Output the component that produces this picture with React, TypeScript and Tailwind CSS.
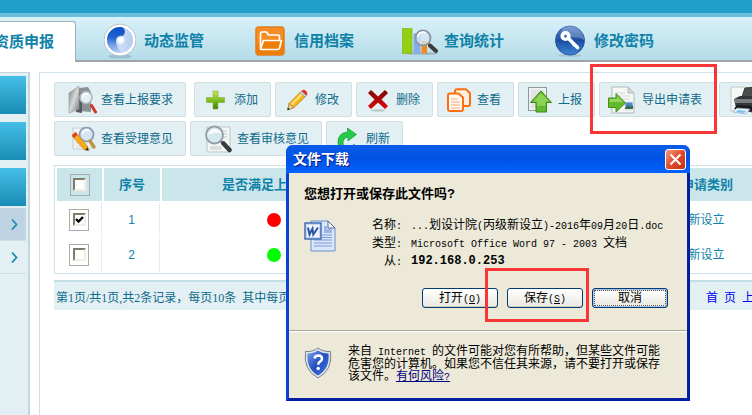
import React, {useState} from "react";

const SwirlIcon = () => (
  <svg width="36" height="36" viewBox="0 0 36 36">
    <defs>
      <linearGradient id="swirl" x1="0" y1="0" x2="1" y2="0">
        <stop offset="0" stopColor="#7ea6e4" />
        <stop offset="0.5" stopColor="#cfdef6" />
        <stop offset="1" stopColor="#b4cbee" />
      </linearGradient>
      <linearGradient id="swirlDark" x1="0.6" y1="0" x2="0.5" y2="1">
        <stop offset="0" stopColor="#0a50c8" />
        <stop offset="0.45" stopColor="#2464d0" />
        <stop offset="1" stopColor="#a9c3ee" stopOpacity="0.4" />
      </linearGradient>
      <radialGradient id="swirlGlow">
        <stop offset="0" stopColor="#ffffff" />
        <stop offset="0.5" stopColor="#ffffff" stopOpacity="0.9" />
        <stop offset="1" stopColor="#ffffff" stopOpacity="0" />
      </radialGradient>
    </defs>
    <ellipse cx="18" cy="33.500" rx="12" ry="2" fill="#8fb4c0" opacity="0.7" />
    <circle cx="18" cy="17" r="16" fill="#ffffff" stroke="#b3c4cf" strokeWidth="1" />
    <circle cx="18" cy="17" r="13" fill="url(#swirl)" />
    <path d="M19 4A13 13 0 0 0 5 17a13 13 0 0 0 15 12.800Q14 25 14 18.500 14 14 18.500 13.500 22.500 13 22.800 9 23 4.500 19 4Z" fill="url(#swirlDark)" />
    <circle cx="18.500" cy="17" r="5" fill="url(#swirlGlow)" />
  </svg>
);

const FolderIcon = () => (
  <svg width="30" height="30" viewBox="0 0 30 30">
    <rect x="0.700" y="0.700" width="28.600" height="28.600" rx="2.500" fill="#f07d06" stroke="#d88b45" />
    <path d="M2 2h26v11C18 12 8 14 2 18Z" fill="#f79a38" opacity="0.6" />
    <path d="M5.500 23V7.500Q5.500 6 7 6h4.500l2 3H23q1.500 0 1.500 1.500V14M5.500 23l3-8.500h18L24.500 22Q24 23.500 22.500 23.500H7Q5.500 23.500 5.500 23Z" fill="none" stroke="#fff" strokeWidth="1.700" strokeLinejoin="round" />
  </svg>
);

const StatsIcon = () => (
  <svg width="36" height="28" viewBox="0 0 36 28">
    <ellipse cx="20" cy="26.500" rx="16" ry="1.300" fill="#8aa7b1" opacity="0.7" />
    <rect x="0.500" y="1.500" width="9.500" height="25" fill="#93cf12" stroke="#7ab00c" strokeWidth="0.600" />
    <rect x="11.500" y="6.500" width="7" height="20" fill="#86abec" />
    <rect x="19.500" y="14" width="5.500" height="12.500" fill="#f28a1b" />
    <circle cx="21" cy="11" r="7.500" fill="#d3e7f7" fillOpacity="0.75" stroke="#8d969c" strokeWidth="1.800" />
    <path d="M16 10a5 5 0 0 1 8-4" fill="none" stroke="#fff" strokeWidth="1.600" />
    <path d="m26.500 16.500 2 2" stroke="#9b9b9b" strokeWidth="2.500" />
    <path d="m28 18.500 6 5.500" stroke="#3c3c3c" strokeWidth="4" strokeLinecap="round" />
  </svg>
);

const KeyIcon = () => (
  <svg width="32" height="32" viewBox="0 0 32 32">
    <defs>
      <linearGradient id="key" x1="0" y1="0" x2="0" y2="1">
        <stop offset="0" stopColor="#5a86cb" />
        <stop offset="0.5" stopColor="#1c4da0" />
        <stop offset="1" stopColor="#3c86d6" />
      </linearGradient>
    </defs>
    <ellipse cx="16" cy="30.500" rx="12" ry="1.300" fill="#8fb4c0" opacity="0.6" />
    <circle cx="16" cy="15.500" r="14.500" fill="url(#key)" stroke="#2a57a0" />
    <path d="M9 2a14 14 0 0 1 21 13C23 10 15 15 7 9Z" fill="#fff" opacity="0.22" />
    <circle cx="11.500" cy="11" r="3.300" fill="none" stroke="#fff" strokeWidth="3.600" />
    <path d="m14.500 13.500 9 9" stroke="#fff" strokeWidth="3.600" strokeLinecap="round" />
    <path d="m19 21 2-2" stroke="#fff" strokeWidth="2" />
  </svg>
);

const ReportIcon = () => (
  <svg width="30" height="30" viewBox="0 0 30 30">
    <defs>
      <linearGradient id="book" x1="0" y1="0" x2="1" y2="1">
        <stop offset="0" stopColor="#757b7d" />
        <stop offset="0.5" stopColor="#d7dadb" />
        <stop offset="1" stopColor="#737a7c" />
      </linearGradient>
    </defs>
    <path d="M11 3l9-1 3 5v20l-12-1Z" fill="#8c9395" />
    <path d="M8 10l6-3v21l-6-1Z" fill="#555b5d" />
    <path d="M1 8 11 1v23L1 28Z" fill="url(#book)" stroke="#8d9496" strokeWidth="0.600" />
    <circle cx="18" cy="12.500" r="6" fill="#e6eff3" stroke="#afb8bd" strokeWidth="1.600" />
    <path d="M14.500 12a3.500 3.500 0 0 1 6-2" fill="none" stroke="#fff" strokeWidth="1.800" />
    <path d="m21.500 17.500 2 3" stroke="#a0a4a6" strokeWidth="2" />
    <path d="m23.500 20.500 4 6.500" stroke="#cf3a2b" strokeWidth="3" strokeLinecap="round" />
  </svg>
);

const PlusIcon = () => (
  <svg width="24" height="24" viewBox="0 0 24 24">
    <defs>
      <linearGradient id="plus" x1="0" y1="0" x2="0" y2="1">
        <stop offset="0" stopColor="#c6e65c" />
        <stop offset="0.500" stopColor="#80c01c" />
        <stop offset="1" stopColor="#3b7d05" />
      </linearGradient>
    </defs>
    <path d="M9 3h5v6.500h6.500v5H14V21H9v-6.500H2.500v-5H9Z" fill="url(#plus)" stroke="#86ad46" strokeWidth="0.600" />
  </svg>
);

const PencilIcon = () => (
  <svg width="24" height="24" viewBox="0 0 24 24">
    <path d="M4 15.500 15.500 4l5 4.500L8.500 20Z" fill="#f5b51c" stroke="#b0740b" strokeWidth="0.700" />
    <path d="M5.500 16 16.500 5l1.500 1.500L7 17.500Z" fill="#ffe36b" />
    <path d="M4 15.500 2.500 22l6-2Z" fill="#efcf9a" stroke="#8a5a18" strokeWidth="0.600" />
    <path d="m3 19.500-.6 2.600 2.600-.9Z" fill="#222" />
    <path d="m15 4.500 1.500-1.500 5 4.500L20 9Z" fill="#c8ced3" stroke="#7d858a" strokeWidth="0.500" />
    <path d="M16.500 3q2-2.500 4.500 0 2.500 2.500.5 4.500Z" fill="#ea2d22" />
  </svg>
);

const CrossIcon = () => (
  <svg width="24" height="24" viewBox="0 0 24 24">
    <defs>
      <linearGradient id="cross" x1="0" y1="0" x2="0" y2="1">
        <stop offset="0" stopColor="#7d0606" />
        <stop offset="1" stopColor="#dd0707" />
      </linearGradient>
    </defs>
    <ellipse cx="12" cy="22.500" rx="7" ry="1" fill="#b4c3c6" />
    <path d="m5 2 7 6.500L19 2l3 3-6.500 6.500L22 18l-3 3-7-6.500L5 21l-3-3 6.500-6.500L2 5Z" fill="url(#cross)" />
  </svg>
);

const CopyIcon = () => (
  <svg width="24" height="24" viewBox="0 0 24 24">
    <g stroke="#fd6f10" strokeWidth="2" strokeLinejoin="round">
      <path d="M10 1.200h9l4 4V16q0 2-2 2H10q-2 0-2-2V3.200q0-2 2-2Z" fill="#fff1e2" />
      <path d="M3 5.500h8.500l4.500 4V21q0 2-2 2H3q-2 0-2-2V7.500q0-2 2-2Z" fill="#fffaf4" />
    </g>
    <path d="M4 11h7M4 14h9M4 17h9M4 20h9" stroke="#f7a871" />
  </svg>
);

const UploadIcon = () => (
  <svg width="24" height="26" viewBox="0 0 24 26">
    <rect x="0.500" y="0.500" width="18" height="23" fill="#f2f3f3" stroke="#8e9798" />
    <rect x="2.500" y="2.500" width="14" height="19" fill="#dfe5e6" />
    <path d="M13 4 23.500 15.500H18.500V25H8V15.500H2.500Z" fill="#63b72d" stroke="#3c8616" />
    <path d="M13 6l8 8.500h-3.500V19q-4-1-8.500 0v-4.500H5Z" fill="#8fd355" />
  </svg>
);

const ExportIcon = () => (
  <svg width="28" height="28" viewBox="0 0 28 28">
    <path d="M4 1h16l6 6v20H4Z" fill="#f6f7f7" stroke="#b1b9bb" />
    <path d="M20 1v6h6Z" fill="#d7dcdd" stroke="#b1b9bb" />
    <path d="M8 7h9M8 10h14M8 13h14M17 24h7" stroke="#d0d6d8" />
    <rect x="17" y="16" width="8" height="7" fill="#4d87ce" stroke="#dfe8ef" />
    <path d="m17 22 3-3 2 2 3-2v4h-8Z" fill="#396b4d" />
    <path d="M.5 12H8V7.500L17.500 17 8 26v-4.500H.5Z" fill="#62b929" stroke="#418f18" />
    <path d="M1.500 13H9v-3l6 6H1.500Z" fill="#95d65f" />
  </svg>
);

const PrinterIcon = () => (
  <svg width="32" height="30" viewBox="0 0 32 30">
    <path d="M1 2h14l4 4v20H1Z" fill="#f5f6f6" stroke="#c0c7c9" />
    <path d="m12 12 3-9 14-1 1 10Z" fill="#4b4e50" stroke="#333" />
    <path d="m4 14 6-3h20l2 3v10l-8 4-18-5Z" fill="#34373a" />
    <path d="M4 14h26v4H5Z" fill="#777c7f" />
    <path d="m7 20 14 1 3 4-8 1-12-2Z" fill="#17191b" />
    <path d="m7 23 13 1-4 5-13-2Z" fill="#e7f3fc" stroke="#7da5c2" strokeWidth="0.600" />
    <path d="m8 25 8 1-2 2-8-1Z" fill="#78bff0" />
  </svg>
);

const NotePencilIcon = () => (
  <svg width="28" height="28" viewBox="0 0 28 28">
    <path d="M3 3h18v21H3Z" fill="#f1f3f5" stroke="#c4cbce" />
    <path d="M6 18h12M6 21h12" stroke="#ced5d8" />
    <circle cx="16.500" cy="9.500" r="7" fill="#d4e6f6" stroke="#8b9bb1" strokeWidth="1.700" />
    <path d="M12.500 9a4 4 0 0 1 6.500-3" fill="none" stroke="#fff" strokeWidth="1.800" />
    <path d="m20 16 4 6" stroke="#bd9549" strokeWidth="3.500" strokeLinecap="round" />
    <path d="m3 9 3-1.500L18 22l-1 3-3-.5L2.500 11.500Z" fill="#f7ab1a" stroke="#cf7c08" strokeWidth="0.600" />
    <path d="m2 10.500 3.500-3.500 2 2.500L4 13Z" fill="#e43a2c" />
    <path d="m15 25 3-3 .7 4Z" fill="#4c3413" />
  </svg>
);

const MagnifierIcon = () => (
  <svg width="30" height="28" viewBox="0 0 30 28">
    <path d="M3 2h23v25H3Z" fill="#f5f6f6" stroke="#bcc3c5" />
    <path d="M18 6h5M19 9h4M19 12h4M6 22h12M6 24h12" stroke="#c2c9cc" />
    <circle cx="10.500" cy="10" r="8.500" fill="#d5e8ed" stroke="#92a1a6" strokeWidth="1.800" />
    <path d="M4 10q1-6 7-6 5 0 6 4-6-1-13 2Z" fill="#fff" opacity="0.8" />
    <path d="m16.500 16 3 3" stroke="#858b8d" strokeWidth="2.500" />
    <path d="m19.500 18.500 6 6.500" stroke="#383b3d" strokeWidth="4.500" strokeLinecap="round" />
  </svg>
);

const RefreshIcon = () => (
  <svg width="24" height="24" viewBox="0 0 24 24">
    <path d="M11.500 1 20.500 7.500 12 14v-4q-5 1-5 6 0 4 4.500 4.500Q16 21 18 17q0 5-6 6-9 .5-10-7Q1.500 6 11.500 5Z" fill="#27c94b" stroke="#149a32" strokeWidth="0.700" />
  </svg>
);

const WordIcon = () => (
  <svg width="32" height="32" viewBox="0 0 32 32">
    <path d="M7 1h17l7 7v23H7Z" fill="#dbe6fa" stroke="#6c8fc8" />
    <path d="M24 1v7h7Z" fill="#fff" stroke="#45679e" />
    <path d="M20 6h3v3h5v4h-8Z" fill="#9bb6e4" />
    <path d="M10 20h18M10 23h18M10 26h18M18 15h10M18 17.500h10" stroke="#7a9cd4" />
    <rect x="1" y="3" width="16" height="16" fill="#c9d9f5" stroke="#2e5cad" strokeWidth="1.300" />
    <rect x="3" y="5" width="12" height="12" fill="#f0f5ff" />
    <path d="m4 7.500 1.500 7 3-6 .8 6L14 7.500" fill="none" stroke="#2a55a8" strokeWidth="2" />
  </svg>
);

const ShieldIcon = () => (
  <svg width="28" height="32" viewBox="0 0 28 32">
    <defs>
      <linearGradient id="shield" x1="0" y1="0" x2="1" y2="1">
        <stop offset="0" stopColor="#7aa4ee" />
        <stop offset="0.500" stopColor="#2450bd" />
        <stop offset="1" stopColor="#3f74de" />
      </linearGradient>
    </defs>
    <path d="M14 1q5 4 12.500 3.500Q29 23 14 31-1 23 1.500 4.500 9 5 14 1Z" fill="#dfe5ea" stroke="#7a8188" />
    <path d="M14 3.500q4 3 10.500 3Q26 21.500 14 28.500 2 21.500 3.500 6.500q6.500 0 10.500-3Z" fill="url(#shield)" />
    <path d="M10.500 11.500q.5-3 4-3 3.500.2 3.500 3 0 2-2 3.200-1.800 1-1.800 3" fill="none" stroke="#fff" strokeWidth="2.600" />
    <circle cx="14.200" cy="21.500" r="1.700" fill="#fff" />
  </svg>
);

const tabs = [
  {name: "资质申报", icon: null, active: true},
  {name: "动态监管", icon: <SwirlIcon />},
  {name: "信用档案", icon: <FolderIcon />},
  {name: "查询统计", icon: <StatsIcon />},
  {name: "修改密码", icon: <KeyIcon />},
];

const toolbar = [
  [
    {name: "查看上报要求", icon: <ReportIcon />, size: "w-[132px] gap-[3px] mr-1"},
    {name: "添加", icon: <PlusIcon />, size: "w-[77px] gap-[6px]"},
    {name: "修改", icon: <PencilIcon />, size: "w-[77px] gap-[6px]"},
    {name: "删除", icon: <CrossIcon />, size: "w-[77px] gap-[6px]"},
    {name: "查看", icon: <CopyIcon />, size: "w-[77px] gap-[6px]"},
    {name: "上报", icon: <UploadIcon />, size: "w-[77px] gap-[6px]"},
    {name: "导出申请表", icon: <ExportIcon />, size: "w-[116px] gap-[6px]"},
    {name: "", icon: <PrinterIcon />, size: "w-[56px]"},
  ],
  [
    {name: "查看受理意见", icon: <NotePencilIcon />, size: "w-[132px] gap-[3px]"},
    {name: "查看审核意见", icon: <MagnifierIcon />, size: "w-[132px] gap-[3px]"},
    {name: "刷新", icon: <RefreshIcon />, size: "w-[77px] gap-[6px]"},
  ],
];

const rows = [
  {id: 1, dot: "bg-[#ff0000]", type: "新设立"},
  {id: 2, dot: "bg-[#00ff00]", type: "新设立"},
];

const Check = ({label, checked, onChange}: {label: string; checked: boolean; onChange: () => void}) => (
  <label className="relative mx-auto flex h-[22px] w-5 items-center justify-center border border-[#aaaaaa]">
    <input type="checkbox" aria-label={label} checked={checked} onChange={onChange}
      className="h-[13px] w-[13px] appearance-none border-2 border-t-[#7f7c6c] border-l-[#7f7c6c] border-r-[#f1efe2] border-b-[#f1efe2] bg-white" />
    {checked && (
      <svg className="pointer-events-none absolute" width="9" height="9" viewBox="0 0 9 9">
        <path d="m1 4 2.500 2.500L8 2" fill="none" stroke="#000" strokeWidth="2.400" />
      </svg>
    )}
  </label>
);

// half-width latin text inside a chinese line
const En = ({children}: {children: React.ReactNode}) => (
  <span className="font-['Liberation_Mono',monospace] text-[10px] leading-none whitespace-pre">{children}</span>
);

const xpButton = "h-5 w-[76px] rounded-[3px] border border-[#003c74] bg-linear-to-b from-white to-[#e9e8e0] text-[12px] leading-none text-black shadow-[inset_0_-1px_0_#d0ccbf]";

const Dialog = () => (
  <div role="dialog" aria-label="文件下载"
    className="absolute top-[145px] left-[286px] w-[404px] rounded-t-[7px] border-x-[3px] border-b-[3px] border-[#0842d6] border-r-[#0020a0] border-b-[#0020a0] bg-[#ece9d8] text-[12px] text-black">
    <div className="-mx-[3px] flex h-7 items-center justify-between rounded-t-[7px] bg-linear-to-b from-[#0a5ce8] via-[#0052e4] to-[#0062fb] pr-1 pl-[7px]">
      <h2 className="text-[14px] font-bold text-white [text-shadow:1px_1px_0_#0a1883]">文件下载</h2>
      <button aria-label="关闭" className="flex h-[21px] w-[21px] items-center justify-center rounded-[3px] border border-white bg-linear-to-br from-[#f09a7e] via-[#e0492b] to-[#c5300f]">
        <svg width="13" height="13" viewBox="0 0 13 13">
          <path d="m1.500 1.500 10 10m0-10-10 10" stroke="#fff" strokeWidth="2" />
        </svg>
      </button>
    </div>

    <div className="px-[15px] pt-[11px]">
      <p className="text-[13px] leading-5 font-bold">您想打开或保存此文件吗?</p>
      <div className="mt-3 flex gap-[30px]">
        <div className="mt-1 shrink-0"><WordIcon /></div>
        <dl className="grid auto-rows-[18px] grid-cols-[36px_auto] gap-x-[9px] leading-[18px] whitespace-nowrap">
          <dt className="text-right">名称<En>:</En></dt>
          <dd><En>...</En>划设计院<En>(</En>丙级新设立<En>)-2016</En>年<En>09</En>月<En>20</En>日<En>.doc</En></dd>
          <dt className="text-right">类型<En>:</En></dt>
          <dd><En>Microsoft Office Word 97 - 2003 </En>文档</dd>
          <dt className="text-right">从<En>:</En></dt>
          <dd className="font-['Liberation_Mono',monospace] font-bold">192.168.0.253</dd>
        </dl>
      </div>
      <div className="mt-[18px] flex justify-end gap-[9px] pr-1">
        <button className={xpButton}>打开<En>(<u>O</u>)</En></button>
        <button className={xpButton}>保存<En>(<u>S</u>)</En></button>
        <button className="h-5 w-[76px] rounded-[3px] border border-[#003c74] bg-[#a6bfee] p-px text-[12px] leading-none">
          <span className="flex h-full items-center justify-center border border-dotted border-[#5c5346] bg-linear-to-b from-white to-[#e9e8e0]">取消</span>
        </button>
      </div>
    </div>

    <div className="mt-[22px] flex h-[68px] gap-4 border-t border-[#aca899] px-[15px] pt-[14px] shadow-[inset_0_1px_0_#fff]">
      <div className="mt-[2px] shrink-0"><ShieldIcon /></div>
      <p className="leading-3 whitespace-nowrap">
        来自<En> Internet </En>的文件可能对您有所帮助，但某些文件可能<br />
        危害您的计算机。如果您不信任其来源，请不要打开或保存<br />
        该文件。<a href="#risk" className="text-[#00007f] underline">有何风险<En>?</En></a>
      </p>
    </div>
  </div>
);

export default function App() {
  const [checked, setChecked] = useState<number[]>([1]);

  const toggle = (id: number) => {
    setChecked(checked.includes(id) ? checked.filter((n) => n !== id) : [...checked, id]);
  };

  const toggleAll = () => {
    setChecked(checked.length === rows.length ? [] : rows.map((row) => row.id));
  };

  return (
    <div className="relative flex min-h-screen flex-col overflow-hidden bg-white font-['Liberation_Sans','Noto_Sans_CJK_SC',sans-serif] text-[12px] text-[#0f6a8c]">
      <header>
        <div className="h-[17px] border-b-4 border-[#6bbfdb] bg-[#1f9fcb]" />
        <nav className="flex h-[45px] border-b-2 border-[#9fa3a5] bg-linear-to-b from-[#d8f1fa] to-[#b5dce8]">
          {tabs.map((tab) => (
            <a key={tab.name} href="#tab"
              className={`flex w-[150px] shrink-0 items-center gap-[6px] pl-[26px] text-[15px] font-bold text-[#0f82a8] ${tab.active ? "-mb-[2px] -ml-[74px] mt-1 rounded-tr-[3px] border-t border-r border-[#a9b0b3] bg-white" : "pt-[5px]"}`}>
              <span className="flex w-9 shrink-0 justify-center">{tab.icon}</span>
              {tab.name}
            </a>
          ))}
        </nav>
      </header>

      <div className="flex flex-1 gap-[9px] pt-[10px]">
        <aside className="w-[30px] shrink-0 border-t border-r-2 border-[#c3d5df] bg-[#e3f0f3] pt-[3px] pr-[2px]">
          <div className="flex flex-col gap-2">
            <div className="h-[38px] bg-linear-to-b from-[#45bfe8] to-[#188cb5]" />
            <div className="h-[38px] bg-linear-to-b from-[#45bfe8] to-[#188cb5]" />
            <div className="h-[38px] bg-linear-to-b from-[#45bfe8] to-[#188cb5]" />
          </div>
          {["bg-[#bfd4e2] mt-[2px]", ""].map((style, i) => (
            <a key={i} href="#menu" aria-label="菜单" className={`flex h-[33px] items-center justify-end border-b border-[#cddee5] pr-2 ${style}`}>
              <svg width="7" height="11" viewBox="0 0 7 11">
                <path d="m1 .5 4.500 5L1 10.500" fill="none" stroke="#1d8db4" strokeWidth="1.800" />
              </svg>
            </a>
          ))}
        </aside>

        <main className="min-w-0 flex-1 overflow-hidden border-t border-l border-[#cfe2ec] pt-[9px] pl-[14px]">
          <div className="flex flex-col gap-1">
            {toolbar.map((line, i) => (
              <div key={i} className="flex gap-1">
                {line.map((item) => (
                  <button key={item.name} aria-label={item.name || "打印"}
                    className={`flex h-[35px] shrink-0 items-center justify-end rounded-[2px] border border-[#cfdfe2] bg-[#e3f0f3] pr-3 whitespace-nowrap ${item.size}`}>
                    {item.icon}
                    {item.name}
                  </button>
                ))}
              </div>
            ))}
          </div>

          <table className="mt-[9px] w-[718px] table-fixed border-separate border-spacing-[2px] border border-[#cfe2ec] text-center text-[#0f82a8]">
            <thead>
              <tr className="h-[33px] text-[13px] [&>th]:bg-[#cbe6eb] [&>th]:p-0">
                <th className="w-[45px]"><Check label="全选" checked={checked.length === rows.length} onChange={toggleAll} /></th>
                <th className="w-14">序号</th>
                <th className="w-[224px]">是否满足上报要求</th>
                <th></th>
                <th className="w-[124px]">申请类别</th>
              </tr>
            </thead>
            <tbody>
              {rows.map((row) => (
                <tr key={row.id} className="h-[33px] [&>td]:border-r [&>td]:border-dotted [&>td]:border-[#c5dae6] [&>td]:p-0">
                  <td><Check label={`选择${row.id}`} checked={checked.includes(row.id)} onChange={() => toggle(row.id)} /></td>
                  <td>{row.id}</td>
                  <td><span className={`mx-auto block h-[14px] w-[14px] rounded-full ${row.dot}`} /></td>
                  <td></td>
                  <td>{row.type}</td>
                </tr>
              ))}
            </tbody>
          </table>

          <div className="mt-[6px] flex h-[30px] w-[718px] items-center justify-between border-t-2 border-[#c3dde5] bg-[#e3f0f3] pt-1 pl-[2px] font-['Liberation_Serif','Noto_Sans_CJK_SC',serif]">
            <span>第1页/共1页,共2条记录，每页10条&nbsp;&nbsp;其中每页</span>
            <span className="flex gap-[6px] text-[#0000ee]">
              <a href="#first">首&nbsp;&nbsp;页</a>
              <a href="#prev">上&nbsp;&nbsp;页</a>
            </span>
          </div>
        </main>
      </div>

      <Dialog />
      {/* highlighted steps */}
      <div className="pointer-events-none absolute top-16 left-[590px] h-[70px] w-[127px] border-[3px] border-[#f93636]" />
      <div className="pointer-events-none absolute top-[268px] left-[485px] h-[54px] w-[104px] border-[3px] border-[#f93636]" />
    </div>
  );
}
